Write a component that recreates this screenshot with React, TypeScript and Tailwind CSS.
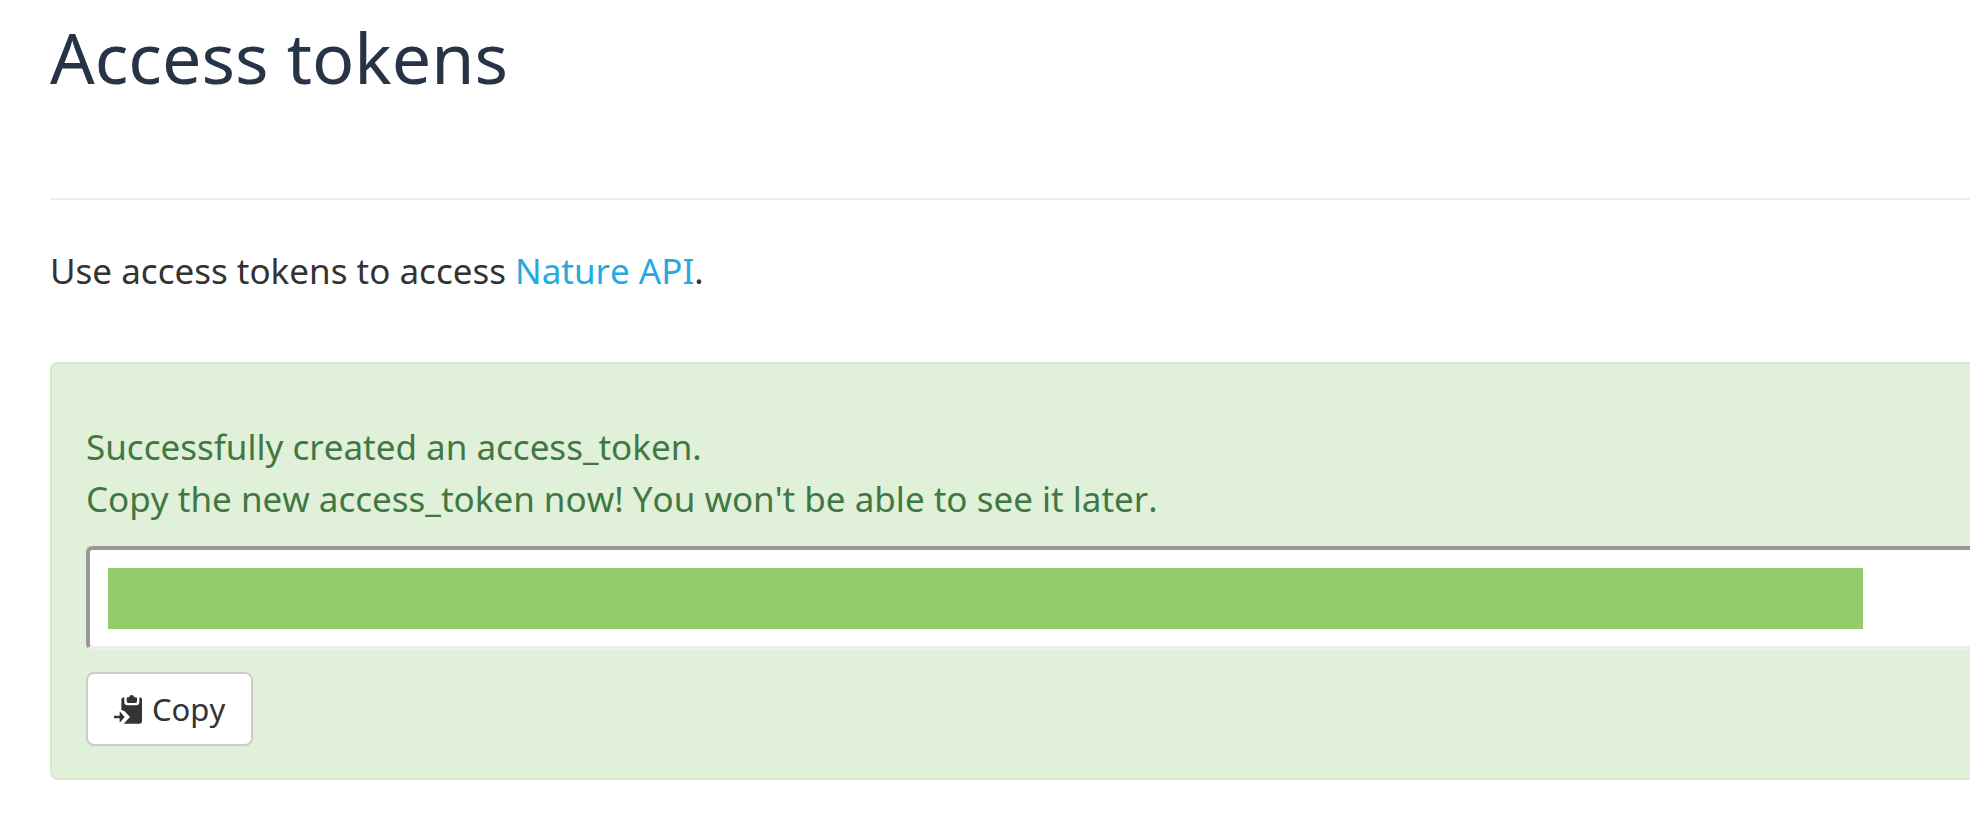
import { useState } from 'react';

function PasteIcon({ className }: { className?: string }) {
  return (
    <svg viewBox="0 0 84 90" className={className} fill="currentColor" aria-hidden="true">
      {/* board */}
      <path d="M27 10.5 L31 10.5 L31 25 Q31 34 40 34 L67 34 Q76 34 76 25 L76 10.5 L80 10.5 Q84 12 84 17 L84 82 Q84 89 77 89 L29 89 L48 69 L31 51 L22 48 L22 17 Q22 12 27 10.5 Z" />
      {/* clip */}
      <path d="M45 10 Q47 3 53 3 Q59 3 61 10 L66 10 Q69 10 69 14 L69 22 Q69 27 64 27 L43 27 Q38 27 38 22 L38 14 Q38 10 41 10 Z" />
      {/* arrow */}
      <path d="M0 65 L17 65 L17 52 L32 69 L17 86 L17 73 L0 73 Z" />
    </svg>
  );
}

export default function AccessTokensPage() {
  const [token] = useState('');

  const handleCopy = () => {
    navigator.clipboard?.writeText(token);
  };

  return (
    <main className="pl-[50px] pt-4 bg-white text-[#333333] text-[35px] leading-[52px] font-['Noto_Sans',sans-serif] [font-kerning:none]">
      <h1 className="text-[70px] leading-[82px] text-[#263445]">Access tokens</h1>
      <hr className="mt-[100px] border-t-2 border-[#eeeeee]" />

      <p className="mt-[45px]">
        Use access tokens to access{' '}
        <a href="#nature-api" className="text-[#26a9e0]">Nature API</a>.
      </p>

      {/* created token */}
      <section className="mt-[65px] pl-[34px] pt-[57px] pb-8 rounded-l-lg border-2 border-r-0 border-[#d7e9c8] bg-[#e0f0d9] text-[#407843]">
        <label htmlFor="access-token" className="block">
          Successfully created an access_token.
          <br />
          Copy the new access_token now! You won't be able to see it later.
        </label>

        <div className="relative mt-[21px]">
          <input
            id="access-token"
            type="text"
            readOnly
            value={token}
            className="block w-full h-[104px] px-4 rounded-l-md border-4 border-r-0 border-t-[#999999] border-l-[#999999] border-b-[#eeeeee] bg-white"
          />
          <div className="absolute left-[22px] right-[107px] top-[22px] h-[61px] bg-[#94cc6b]" />
        </div>

        <button
          type="button"
          onClick={handleCopy}
          className="mt-[22px] flex h-[74px] items-center gap-[10px] rounded-lg border-2 border-[#cccccc] bg-white px-[26px] text-[31px] leading-[44px] text-[#333333]"
        >
          <PasteIcon className="w-7 h-[30px]" />
          Copy
        </button>
      </section>
    </main>
  );
}
